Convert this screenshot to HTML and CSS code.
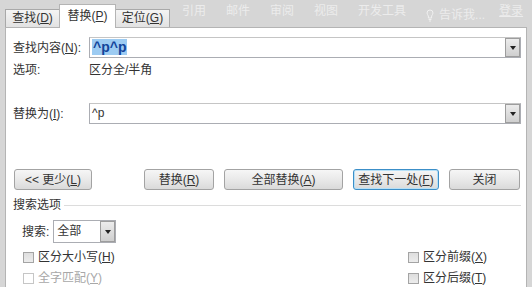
FILE: index.html
```html
<!DOCTYPE html>
<html lang="zh-CN">
<head>
    <meta charset="UTF-8">
    <meta name="viewport" content="width=device-width, initial-scale=1.0">
    <title>查找和替换</title>
    <link rel="stylesheet" href="styles.css">
</head>
<body>
    <div class="ribbon">
        <div class="tabs">
            <div class="tab">查找(<u>D</u>)</div>
            <div class="tab active">替换(<u>P</u>)</div>
            <div class="tab">定位(<u>G</u>)</div>
        </div>
        <div class="menu">
            <span>引用</span>
            <span>邮件</span>
            <span>审阅</span>
            <span>视图</span>
            <span>开发工具</span>
            <span class="tell">
                <svg width="8" height="13" viewBox="0 0 8 13"><path d="M4 1a3 3 0 0 0-3 3c0 1.3.9 2 1.4 3v2h3.2v-2c.5-1 1.4-1.7 1.4-3a3 3 0 0 0-3-3zM2.6 10.5h2.8M3 12h2" fill="none" stroke="#f0f0f0" stroke-width="1"/></svg>
                <span>告诉我...</span>
            </span>
            <span class="login">登录</span>
        </div>
    </div>

    <div class="dialog">
        <div class="field-row">
            <label class="field-label">查找内容(<u>N</u>):</label>
            <div class="combo">
                <span class="combo-text"><span class="selected">^p^p</span></span>
                <span class="combo-btn"></span>
            </div>
        </div>
        <div class="options-row">
            <span class="field-label">选项:</span>
            <span>区分全/半角</span>
        </div>

        <div class="field-row replace-row">
            <label class="field-label">替换为(<u>I</u>):</label>
            <div class="combo">
                <span class="combo-text">^p</span>
                <span class="combo-btn"></span>
            </div>
        </div>

        <div class="buttons">
            <button class="btn btn-less">&lt;&lt; 更少(<u>L</u>)</button>
            <button class="btn btn-replace">替换(<u>R</u>)</button>
            <button class="btn btn-all">全部替换(<u>A</u>)</button>
            <button class="btn btn-next">查找下一处(<u>F</u>)</button>
            <button class="btn btn-close">关闭</button>
        </div>

        <div class="section-title">
            <span>搜索选项</span>
            <span class="section-line"></span>
        </div>

        <div class="search-row">
            <span>搜索:</span>
            <div class="select">
                <span class="select-text">全部</span>
                <span class="combo-btn"></span>
            </div>
        </div>

        <div class="checks">
            <div class="check"><span class="box"></span><span>区分大小写(<u>H</u>)</span></div>
            <div class="check"><span class="box"></span><span>区分前缀(<u>X</u>)</span></div>
            <div class="check disabled"><span class="box"></span><span>全字匹配(<u>Y</u>)</span></div>
            <div class="check"><span class="box"></span><span>区分后缀(<u>T</u>)</span></div>
        </div>
    </div>
</body>
</html>
```

FILE: styles.css
```css
body {
    margin: 0;
    padding: 0;
    width: 532px;
    height: 287px;
    overflow: hidden;
    background: #d6d6d6;
    font-family: "Liberation Sans", "Noto Sans CJK SC", sans-serif;
    font-size: 12px;
    line-height: 16px;
    color: #333;
}
u { text-decoration: underline; }

/* 顶部功能区 */
.ribbon { display: flex; height: 27px; padding-left: 5px; }
.tabs { display: flex; align-items: flex-end; }
.tab {
    box-sizing: border-box;
    height: 18px;
    width: 55px;
    text-align: center;
    border: 1px solid #a9a9a9;
    border-bottom: none;
    background: linear-gradient(#f4f4f4, #e2e2e2);
    line-height: 17px;
}
.tab.active {
    height: 24px;
    width: 57px;
    background: #fff;
    line-height: 22px;
    margin: 0 -1px -1px;
    position: relative;
    z-index: 1;
    border-color: #b4b4b4;
}
.menu { display: flex; gap: 20px; margin: 3px 0 0 12px; color: #ececec; }
.tell { display: flex; align-items: center; gap: 5px; }
.login { margin-left: -6px; text-decoration: underline; }

/* 对话框 */
.dialog {
    box-sizing: border-box;
    margin-left: 5px;
    width: 522px;
    height: 260px;
    border: 1px solid #b4b4b4;
    border-bottom: none;
    background: #fff;
    padding: 9px 5px 0 7px;
}
.field-row { display: flex; align-items: center; height: 21px; }
.field-label { width: 76px; flex: none; }
.combo {
    flex: 1;
    box-sizing: border-box;
    height: 21px;
    display: flex;
    border: 1px solid #abadb3;
    border-top-color: #c5c5c5;
}
.combo-text { flex: 1; padding-left: 2px; line-height: 19px; }
.selected {
    background: #9ccbf2;
    color: #12449a;
    font-weight: bold;
    font-size: 14px;
    padding: 0 1px;
}
.combo-btn {
    width: 15px;
    flex: none;
    margin-left: auto;
    box-sizing: border-box;
    border: 1px solid #9d9d9d;
    background: linear-gradient(#ececec, #cfcfcf);
    display: flex;
    align-items: center;
    justify-content: center;
}
.combo-btn::after {
    content: "";
    border-left: 3px solid transparent;
    border-right: 3px solid transparent;
    border-top: 4px solid #222;
}
.options-row { display: flex; margin-top: 4px; }
.replace-row { margin-top: 25px; }

/* 按钮 */
.buttons { display: flex; margin-top: 45px; padding-left: 1px; }
.btn {
    box-sizing: border-box;
    height: 21px;
    padding: 0;
    font: inherit;
    color: #333;
    border: 1px solid #a3a3a3;
    border-radius: 3px;
    background: linear-gradient(#f6f6f6 0%, #e9e9e9 50%, #dadada 100%);
}
.btn-less { width: 78px; }
.btn-replace { width: 70px; margin-left: 52px; }
.btn-all { width: 119px; margin-left: 10px; }
.btn-next {
    width: 86px;
    margin-left: 10px;
    border-color: #3c8fc8;
    box-shadow: inset 0 0 0 1px #b7e0f7;
}
.btn-close { width: 71px; margin-left: 10px; }

/* 搜索选项 */
.section-title { display: flex; align-items: center; margin-top: 7px; }
.section-line { flex: 1; height: 1px; background: #dcdcdc; margin-left: 3px; }
.search-row { display: flex; align-items: center; margin-top: 7px; padding-left: 9px; gap: 4px; }
.select {
    box-sizing: border-box;
    width: 63px;
    height: 23px;
    display: flex;
    border: 1px solid #abadb3;
}
.select-text { flex: 1; padding-left: 3px; line-height: 21px; }
.checks {
    display: grid;
    grid-template-columns: 385px auto;
    row-gap: 5px;
    margin-top: 6px;
    padding-left: 10px;
}
.check { display: flex; align-items: center; gap: 4px; }
.box {
    box-sizing: border-box;
    width: 11px;
    height: 11px;
    border: 1px solid #a4a4a4;
    background: linear-gradient(#dedede, #ececec);
}
.check.disabled { color: #a8a8a8; }
.check.disabled .box { background: #fff; border-color: #c6c6c6; }
```
